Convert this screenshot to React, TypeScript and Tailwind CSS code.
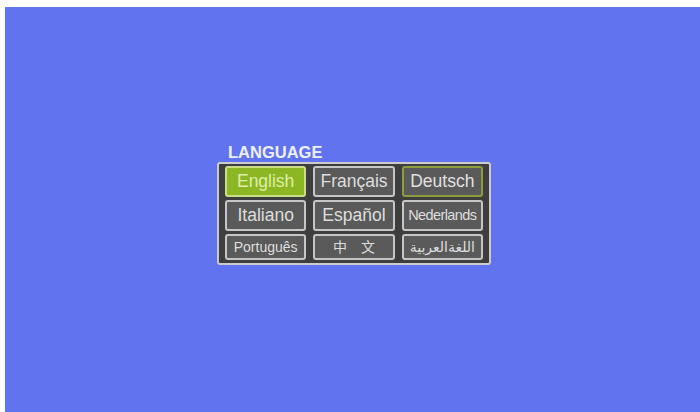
const langs: { label: string; cls: string; state?: "active" | "focus" }[] = [
  { label: "English", cls: "text-[17.5px]", state: "active" },
  { label: "Français", cls: "text-[17.5px]" },
  { label: "Deutsch", cls: "text-[17.5px]", state: "focus" },
  { label: "Italiano", cls: "text-[17.5px]" },
  { label: "Español", cls: "text-[17.5px]" },
  { label: "Nederlands", cls: "text-[14.5px] tracking-[-0.6px]" },
  { label: "Português", cls: "text-[14px]" },
  { label: "中　文", cls: "text-[14px]" },
  { label: "اللغةالعربية", cls: "text-[14px]" },
];

export default function App() {
  return (
    <div className="w-[700px] h-[412px] bg-white pt-[7px] pl-[5px] flex">
      <div className="flex-1 bg-[#6173ee] pt-[136px] pl-[212px] font-['Liberation_Sans','DejaVu_Sans','Noto_Sans_CJK_SC',sans-serif]">
        <p className="ml-[11px] text-[16.5px] font-bold leading-[19px] text-[#eef0ff]">
          LANGUAGE
        </p>
        <div className="w-[274px] h-[103px] border-2 border-[#cbcbcb] rounded-[3px] bg-[#3e3e3e] px-[6px] pt-[2px] pb-[3px] grid grid-cols-3 gap-x-[7px] gap-y-[3px]">
          {langs.map((l) => (
            <div
              key={l.label}
              className={
                "flex items-center justify-center whitespace-nowrap rounded-[3px] border-2 " +
                l.cls +
                (l.state === "active"
                  ? " bg-[#8db624] border-[#c9de86] text-[#dcefa6]"
                  : l.state === "focus"
                  ? " bg-[#5a5a5a] border-[#8c9d3e] text-[#e0e0e0]"
                  : " bg-[#5a5a5a] border-[#c6c6c6] text-[#dedede]")
              }
            >
              {l.label}
            </div>
          ))}
        </div>
      </div>
    </div>
  );
}
